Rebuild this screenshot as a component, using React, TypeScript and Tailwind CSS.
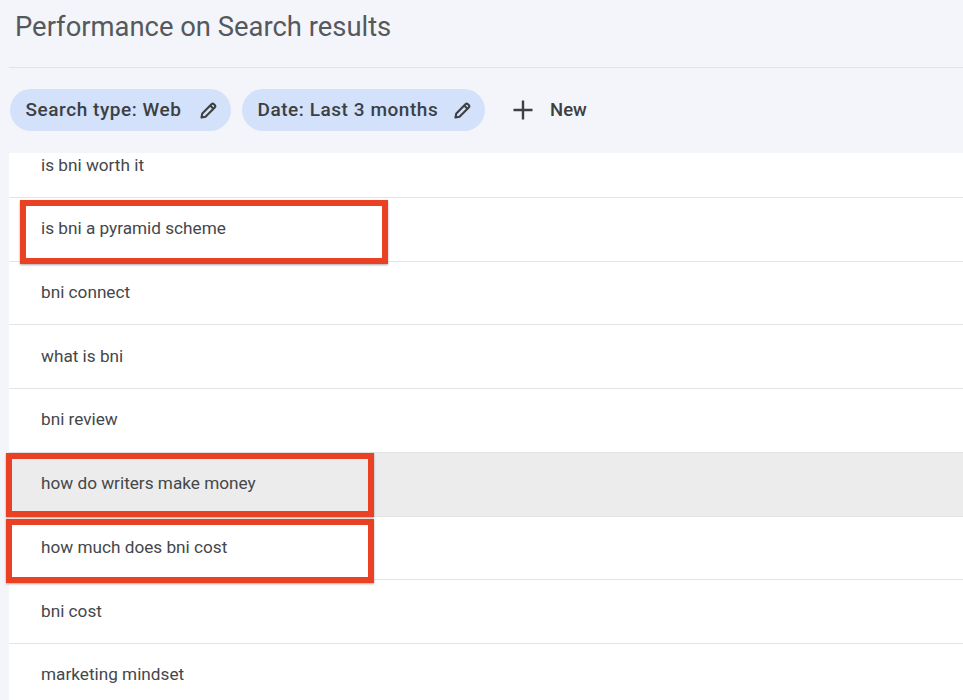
import React from 'react';

interface Query {
  text: string;
  hovered?: boolean;
  box?: string;
}

const queries: Query[] = [
  { text: 'is bni a pyramid scheme', box: 'left-[11px] w-[368px] top-[2px] h-[64px]' },
  { text: 'bni connect' },
  { text: 'what is bni' },
  { text: 'bni review' },
  { text: 'how do writers make money', hovered: true, box: 'left-[-3px] w-[368px] top-0 h-[64px]' },
  { text: 'how much does bni cost', box: 'left-[-3px] w-[368px] top-[2px] h-[64px]' },
  { text: 'bni cost' },
  { text: 'marketing mindset' },
];

const Pencil = () => (
  <svg viewBox="0 0 24 24" className="w-[21px] h-[21px] shrink-0" fill="none" stroke="#3c4043" strokeWidth="2.4" strokeLinejoin="round">
    <path d="M4 20l.9-4.6L15.4 4.9a2 2 0 0 1 2.8 0l.9.9a2 2 0 0 1 0 2.8L8.6 19.1z" />
    <path d="M14 6.4l3.6 3.6" />
  </svg>
);

const Chip = ({ label, width }: { label: string; width: string }) => (
  <div className={`h-[42px] ${width} rounded-full bg-[#d3e1fa] flex items-center justify-between pl-[15.5px] pr-[12px]`}>
    <span className="text-[19px] font-medium text-[#3c4043] tracking-[0.55px]">{label}</span>
    <Pencil />
  </div>
);

export default function App() {
  return (
    <div className="h-[700px] overflow-hidden bg-[#f3f5fa] font-['Roboto',sans-serif]">
      <h1 className="h-[54px] pl-[15px] pt-[11px] text-[27.4px] leading-[32px] text-[#55585c]">Performance on Search results</h1>
      <div className="ml-[9px] mt-[13px] h-[1px] bg-[#e0e2e6]"></div>
      <div className="ml-[10px] mt-[21px] flex items-center gap-[11px]">
        <Chip label="Search type: Web" width="w-[221px]" />
        <Chip label="Date: Last 3 months" width="w-[243px]" />
        <div className="ml-[15px] flex items-center gap-[15px]">
          <svg viewBox="0 0 24 24" className="w-[24px] h-[24px]" fill="none" stroke="#3c4043" strokeWidth="2.4">
            <path d="M12 2.5v19M2.5 12h19" />
          </svg>
          <span className="mt-[1px] text-[18.5px] font-medium text-[#3c4043]">New</span>
        </div>
      </div>
      <div className="ml-[9px] mt-[22px] h-[547px] bg-white">
        <div className="h-[44.75px] border-b border-[#e3e4e6] pl-[32px] text-[17.2px] leading-[24px] text-[#44474b]">is bni worth it</div>
        {queries.map(q => (
          <div
            key={q.text}
            className={`relative h-[63.75px] border-b border-[#e3e4e6] pl-[32px] flex items-center text-[17.2px] text-[#44474b] ${q.hovered ? 'bg-[#ececec]' : ''}`}
          >
            {q.text}
            {q.box && (
              <div className={`absolute ${q.box} border-[6px] border-[#ea4024] shadow-[0_1px_2px_rgba(60,64,67,0.45)]`}></div>
            )}
          </div>
        ))}
      </div>
    </div>
  );
}
